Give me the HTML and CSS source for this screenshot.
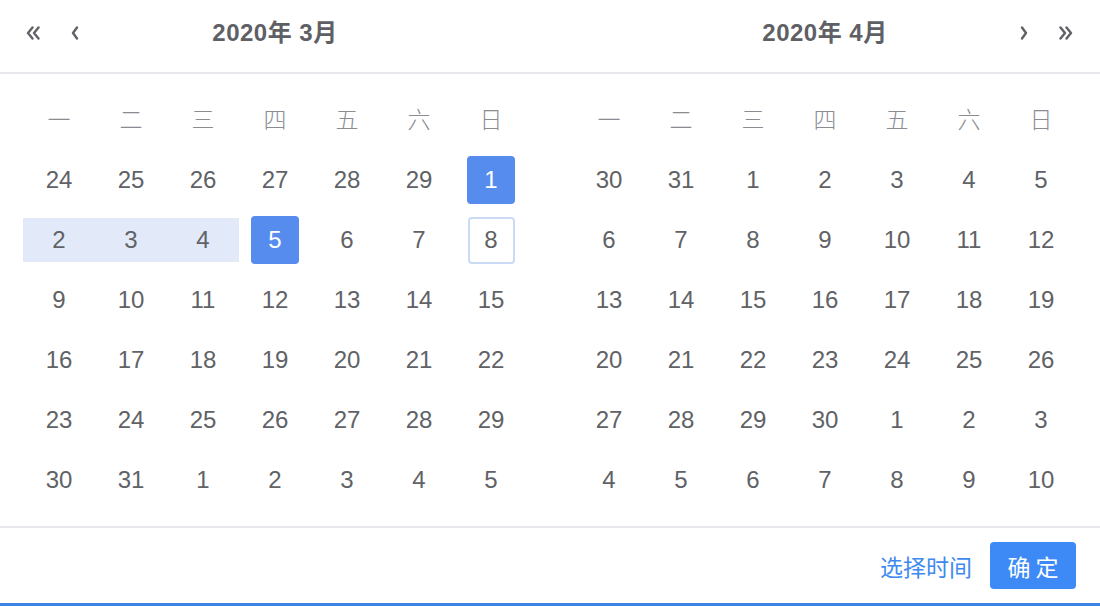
FILE: index.html
```html
<!DOCTYPE html>
<html lang="zh-CN">
<head>
<meta charset="utf-8">
<title>日期范围选择</title>
<link rel="stylesheet" href="styles.css">
</head>
<body>
<div class="picker">
  <div class="panels">
    <div class="panel">
      <div class="header">
        <div class="nav nav-left">
          <svg class="icon-d" viewBox="0 0 14 14"><path d="M6.5 1.5 L2 7 L6.5 12.5 M12.5 1.5 L8 7 L12.5 12.5"/></svg>
          <svg class="icon-s" viewBox="0 0 8 14"><path d="M6 1.5 L2 7 L6 12.5"/></svg>
        </div>
        <div class="title">2020年 3月</div>
        <div></div>
      </div>
      <div class="content">
        <div class="grid">
          <div class="wk">一</div><div class="wk">二</div><div class="wk">三</div><div class="wk">四</div><div class="wk">五</div><div class="wk">六</div><div class="wk">日</div>
          <div class="cell"><span>24</span></div><div class="cell"><span>25</span></div><div class="cell"><span>26</span></div><div class="cell"><span>27</span></div><div class="cell"><span>28</span></div><div class="cell"><span>29</span></div><div class="cell selected"><span>1</span></div>
          <div class="cell in-range"><span>2</span></div><div class="cell in-range"><span>3</span></div><div class="cell in-range"><span>4</span></div><div class="cell selected"><span>5</span></div><div class="cell"><span>6</span></div><div class="cell"><span>7</span></div><div class="cell today"><span>8</span></div>
          <div class="cell"><span>9</span></div><div class="cell"><span>10</span></div><div class="cell"><span>11</span></div><div class="cell"><span>12</span></div><div class="cell"><span>13</span></div><div class="cell"><span>14</span></div><div class="cell"><span>15</span></div>
          <div class="cell"><span>16</span></div><div class="cell"><span>17</span></div><div class="cell"><span>18</span></div><div class="cell"><span>19</span></div><div class="cell"><span>20</span></div><div class="cell"><span>21</span></div><div class="cell"><span>22</span></div>
          <div class="cell"><span>23</span></div><div class="cell"><span>24</span></div><div class="cell"><span>25</span></div><div class="cell"><span>26</span></div><div class="cell"><span>27</span></div><div class="cell"><span>28</span></div><div class="cell"><span>29</span></div>
          <div class="cell"><span>30</span></div><div class="cell"><span>31</span></div><div class="cell"><span>1</span></div><div class="cell"><span>2</span></div><div class="cell"><span>3</span></div><div class="cell"><span>4</span></div><div class="cell"><span>5</span></div>
        </div>
      </div>
    </div>
    <div class="panel">
      <div class="header">
        <div></div>
        <div class="title">2020年 4月</div>
        <div class="nav nav-right">
          <svg class="icon-s" viewBox="0 0 8 14"><path d="M2 1.5 L6 7 L2 12.5"/></svg>
          <svg class="icon-d" viewBox="0 0 14 14"><path d="M1.5 1.5 L6 7 L1.5 12.5 M7.5 1.5 L12 7 L7.5 12.5"/></svg>
        </div>
      </div>
      <div class="content">
        <div class="grid">
          <div class="wk">一</div><div class="wk">二</div><div class="wk">三</div><div class="wk">四</div><div class="wk">五</div><div class="wk">六</div><div class="wk">日</div>
          <div class="cell"><span>30</span></div><div class="cell"><span>31</span></div><div class="cell"><span>1</span></div><div class="cell"><span>2</span></div><div class="cell"><span>3</span></div><div class="cell"><span>4</span></div><div class="cell"><span>5</span></div>
          <div class="cell"><span>6</span></div><div class="cell"><span>7</span></div><div class="cell"><span>8</span></div><div class="cell"><span>9</span></div><div class="cell"><span>10</span></div><div class="cell"><span>11</span></div><div class="cell"><span>12</span></div>
          <div class="cell"><span>13</span></div><div class="cell"><span>14</span></div><div class="cell"><span>15</span></div><div class="cell"><span>16</span></div><div class="cell"><span>17</span></div><div class="cell"><span>18</span></div><div class="cell"><span>19</span></div>
          <div class="cell"><span>20</span></div><div class="cell"><span>21</span></div><div class="cell"><span>22</span></div><div class="cell"><span>23</span></div><div class="cell"><span>24</span></div><div class="cell"><span>25</span></div><div class="cell"><span>26</span></div>
          <div class="cell"><span>27</span></div><div class="cell"><span>28</span></div><div class="cell"><span>29</span></div><div class="cell"><span>30</span></div><div class="cell"><span>1</span></div><div class="cell"><span>2</span></div><div class="cell"><span>3</span></div>
          <div class="cell"><span>4</span></div><div class="cell"><span>5</span></div><div class="cell"><span>6</span></div><div class="cell"><span>7</span></div><div class="cell"><span>8</span></div><div class="cell"><span>9</span></div><div class="cell"><span>10</span></div>
        </div>
      </div>
    </div>
  </div>
  <div class="footer">
    <span class="link">选择时间</span>
    <button class="btn">确 定</button>
  </div>
</div>
</body>
</html>
```

FILE: styles.css
```css
* { box-sizing: border-box; }
html, body { margin: 0; padding: 0; background: #fff; }
body {
  font-family: "Liberation Sans", "Noto Sans CJK SC", sans-serif;
  color: #606266;
}
.picker {
  width: 1100px;
  height: 606px;
  border-bottom: 3px solid #3f83e6;
  display: flex;
  flex-direction: column;
}
.panels {
  display: flex;
  border-bottom: 2px solid #e6e8ec;
}
.panel { width: 550px; }
.header {
  height: 74px;
  padding-bottom: 12px;
  border-bottom: 2px solid #e6e8ec;
  display: grid;
  grid-template-columns: 1fr auto 1fr;
  align-items: center;
}
.title {
  font-size: 24px;
  font-weight: 700;
  color: #5e6066;
  letter-spacing: 0.5px;
}
.nav {
  display: flex;
  align-items: center;
  gap: 31px;
  margin-top: 6px;
}
.nav-left { padding-left: 26px; }
.nav-right { justify-content: flex-end; padding-right: 27px; }
.nav svg { fill: none; stroke: #5f6166; stroke-width: 2.4; stroke-linecap: round; stroke-linejoin: round; }
.icon-d { width: 14px; height: 14px; }
.icon-s { width: 8px; height: 14px; }
.content { padding: 16px 23px; }
.grid {
  display: grid;
  grid-template-columns: repeat(7, 72px);
  grid-auto-rows: 60px;
}
.wk {
  display: flex;
  align-items: center;
  justify-content: center;
  padding-bottom: 4px;
  font-family: "Noto Sans CJK SC", sans-serif;
  font-size: 23px;
  font-weight: 300;
  color: #8a8c92;
}
.cell {
  display: flex;
  align-items: center;
  justify-content: center;
  font-size: 24px;
}
.cell span {
  width: 48px;
  height: 48px;
  display: flex;
  align-items: center;
  justify-content: center;
  border-radius: 4px;
}
.cell.in-range {
  padding: 8px 0;
  background: #e2e9f9;
  background-clip: content-box;
}
.cell.selected span {
  background: #568cee;
  color: #fff;
}
.cell.today span {
  border: 2px solid #cbdbf5;
  width: 47px;
  height: 47px;
}
.footer {
  flex: 1;
  display: flex;
  justify-content: flex-end;
  align-items: center;
  gap: 18px;
  padding-right: 24px;
}
.link {
  font-size: 23px;
  color: #3e8af0;
}
.btn {
  font-family: "Noto Sans CJK SC", sans-serif;
  width: 86px;
  height: 47px;
  border: none;
  border-radius: 4px;
  background: #3d8af7;
  color: #fff;
  font-size: 23px;
  padding: 0;
}
```
